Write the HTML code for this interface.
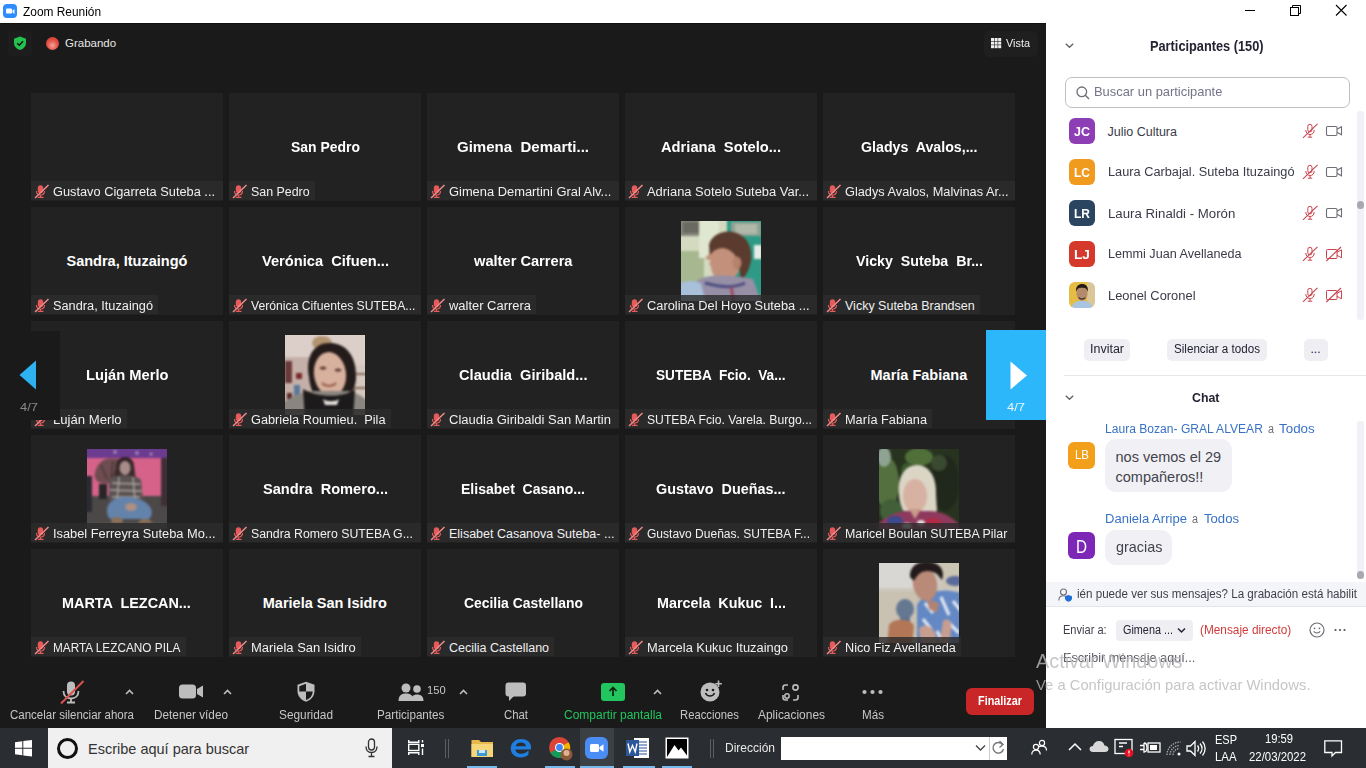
<!DOCTYPE html><html><head><meta charset="utf-8"><style>
*{margin:0;padding:0;box-sizing:border-box}
html,body{width:1366px;height:768px;overflow:hidden;background:#1a1a1a;font-family:"Liberation Sans",sans-serif}
.a{position:absolute}
.t{position:absolute;white-space:pre;line-height:1;transform-origin:0 0}
svg{position:absolute;overflow:visible}
</style></head><body>
<div class="a" style="left:0;top:0;width:1366px;height:23px;background:#fff"></div><div class="a" style="left:3px;top:4px;width:14px;height:14px;border-radius:4px;background:#2d8cff"></div><svg style="left:3px;top:4px" width="14" height="14"><rect x="3" y="4.5" width="6" height="5" rx="1" fill="#fff"/><path d="M9.5 6.5 L11.5 5 V10 L9.5 8.5Z" fill="#fff"/></svg><div class="t" style="left:23.00px;top:6.00px;font-size:12px;color:#000;transform:scaleX(0.9910);">Zoom Reunión</div><div class="a" style="left:1245px;top:10px;width:10px;height:1px;background:#000"></div><svg style="left:1288px;top:3px" width="16" height="16"><rect x="2.5" y="4.5" width="8" height="8" fill="none" stroke="#000" stroke-width="1"/><path d="M4.5 4.5 V2.5 H12.5 V10.5 H10.5" fill="none" stroke="#000" stroke-width="1"/></svg><svg style="left:1334px;top:3px" width="16" height="16"><path d="M2 2 L12.5 12.5 M12.5 2 L2 12.5" stroke="#000" stroke-width="1.1"/></svg><div class="a" style="left:0;top:23px;width:1046px;height:705px;background:#1a1a1a"></div><div class="a" style="left:0;top:23px;width:1046px;height:1px;background:#111"></div><div class="a" style="left:8px;top:31px;width:24px;height:25px;border-radius:4px;background:#1d1d1d"></div><svg style="left:13px;top:36px" width="15" height="15"><path d="M7 0.5 L13 2.8 V7 C13 10.5 10.5 12.8 7 14 C3.5 12.8 1 10.5 1 7 V2.8Z" fill="#23c24f"/><path d="M4.2 7.2 L6.3 9.2 L10 5.3" fill="none" stroke="#111" stroke-width="1.5"/></svg><div class="a" style="left:46px;top:37px;width:13px;height:13px;border-radius:50%;background:radial-gradient(circle at 50% 65%,#f6a39a 0,#e5574a 45%,#d94338 70%)"></div><div class="t" style="left:65.00px;top:38.00px;font-size:11.5px;color:#e6e6e6;">Grabando</div><div class="a" style="left:984px;top:31px;width:54px;height:26px;border-radius:5px;background:#1f1f1f"></div><svg style="left:991px;top:38px" width="11" height="11"><rect x="0.0" y="0.0" width="3" height="3" fill="#f0f0f0"/><rect x="0.0" y="3.6" width="3" height="3" fill="#f0f0f0"/><rect x="0.0" y="7.2" width="3" height="3" fill="#f0f0f0"/><rect x="3.6" y="0.0" width="3" height="3" fill="#f0f0f0"/><rect x="3.6" y="3.6" width="3" height="3" fill="#f0f0f0"/><rect x="3.6" y="7.2" width="3" height="3" fill="#f0f0f0"/><rect x="7.2" y="0.0" width="3" height="3" fill="#f0f0f0"/><rect x="7.2" y="3.6" width="3" height="3" fill="#f0f0f0"/><rect x="7.2" y="7.2" width="3" height="3" fill="#f0f0f0"/></svg><div class="t" style="left:1006.00px;top:38.00px;font-size:11.5px;color:#f0f0f0;transform:scaleX(0.9464);">Vista</div><div class="a" style="left:31px;top:93px;width:192px;height:108px;background:#222"></div><div class="a" style="left:31px;top:181px;width:192px;height:19px;background:rgba(44,44,44,0.82)"></div><svg style="left:33px;top:182px" width="16" height="16"><rect x="4.8" y="3.2" width="5.4" height="8" rx="2.7" fill="#e65a5a"/><path d="M3.5 9 C3.5 11.8 5.3 13 7.5 13 C9.7 13 11.5 11.8 11.5 9" fill="none" stroke="#e65a5a" stroke-width="1.2"/><path d="M7.5 13 V15 M4.8 15.3 H10.5" stroke="#e65a5a" stroke-width="1.3"/><path d="M2 16 L15.5 3" stroke="#f08a8a" stroke-width="1.5"/></svg><div class="t" style="left:53.00px;top:186.00px;font-size:12.5px;color:#f0f0f0;transform:scaleX(1.0226);">Gustavo Cigarreta Suteba ...</div><div class="a" style="left:229px;top:93px;width:192px;height:108px;background:#222"></div><div class="t" style="left:290.50px;top:140.00px;font-size:14.5px;color:#fff;font-weight:bold;transform:scaleX(0.9622);">San Pedro</div><div class="a" style="left:229px;top:181px;width:86px;height:19px;background:rgba(44,44,44,0.82)"></div><svg style="left:231px;top:182px" width="16" height="16"><rect x="4.8" y="3.2" width="5.4" height="8" rx="2.7" fill="#e65a5a"/><path d="M3.5 9 C3.5 11.8 5.3 13 7.5 13 C9.7 13 11.5 11.8 11.5 9" fill="none" stroke="#e65a5a" stroke-width="1.2"/><path d="M7.5 13 V15 M4.8 15.3 H10.5" stroke="#e65a5a" stroke-width="1.3"/><path d="M2 16 L15.5 3" stroke="#f08a8a" stroke-width="1.5"/></svg><div class="t" style="left:251.00px;top:186.00px;font-size:12.5px;color:#f0f0f0;transform:scaleX(0.9920);">San Pedro</div><div class="a" style="left:427px;top:93px;width:192px;height:108px;background:#222"></div><div class="t" style="left:457.00px;top:140.00px;font-size:14.5px;color:#fff;font-weight:bold;transform:scaleX(1.0367);">Gimena  Demarti...</div><div class="a" style="left:427px;top:181px;width:192px;height:19px;background:rgba(44,44,44,0.82)"></div><svg style="left:429px;top:182px" width="16" height="16"><rect x="4.8" y="3.2" width="5.4" height="8" rx="2.7" fill="#e65a5a"/><path d="M3.5 9 C3.5 11.8 5.3 13 7.5 13 C9.7 13 11.5 11.8 11.5 9" fill="none" stroke="#e65a5a" stroke-width="1.2"/><path d="M7.5 13 V15 M4.8 15.3 H10.5" stroke="#e65a5a" stroke-width="1.3"/><path d="M2 16 L15.5 3" stroke="#f08a8a" stroke-width="1.5"/></svg><div class="t" style="left:449.00px;top:186.00px;font-size:12.5px;color:#f0f0f0;transform:scaleX(1.0307);">Gimena Demartini Gral Alv...</div><div class="a" style="left:625px;top:93px;width:192px;height:108px;background:#222"></div><div class="t" style="left:661.00px;top:140.00px;font-size:14.5px;color:#fff;font-weight:bold;transform:scaleX(1.0132);">Adriana  Sotelo...</div><div class="a" style="left:625px;top:181px;width:192px;height:19px;background:rgba(44,44,44,0.82)"></div><svg style="left:627px;top:182px" width="16" height="16"><rect x="4.8" y="3.2" width="5.4" height="8" rx="2.7" fill="#e65a5a"/><path d="M3.5 9 C3.5 11.8 5.3 13 7.5 13 C9.7 13 11.5 11.8 11.5 9" fill="none" stroke="#e65a5a" stroke-width="1.2"/><path d="M7.5 13 V15 M4.8 15.3 H10.5" stroke="#e65a5a" stroke-width="1.3"/><path d="M2 16 L15.5 3" stroke="#f08a8a" stroke-width="1.5"/></svg><div class="t" style="left:647.00px;top:186.00px;font-size:12.5px;color:#f0f0f0;transform:scaleX(1.0330);">Adriana Sotelo Suteba Var...</div><div class="a" style="left:823px;top:93px;width:192px;height:108px;background:#222"></div><div class="t" style="left:860.50px;top:140.00px;font-size:14.5px;color:#fff;font-weight:bold;transform:scaleX(0.9788);">Gladys  Avalos,...</div><div class="a" style="left:823px;top:181px;width:192px;height:19px;background:rgba(44,44,44,0.82)"></div><svg style="left:825px;top:182px" width="16" height="16"><rect x="4.8" y="3.2" width="5.4" height="8" rx="2.7" fill="#e65a5a"/><path d="M3.5 9 C3.5 11.8 5.3 13 7.5 13 C9.7 13 11.5 11.8 11.5 9" fill="none" stroke="#e65a5a" stroke-width="1.2"/><path d="M7.5 13 V15 M4.8 15.3 H10.5" stroke="#e65a5a" stroke-width="1.3"/><path d="M2 16 L15.5 3" stroke="#f08a8a" stroke-width="1.5"/></svg><div class="t" style="left:845.00px;top:186.00px;font-size:12.5px;color:#f0f0f0;transform:scaleX(1.0208);">Gladys Avalos, Malvinas Ar...</div><div class="a" style="left:31px;top:207px;width:192px;height:108px;background:#222"></div><div class="t" style="left:66.50px;top:254.00px;font-size:14.5px;color:#fff;font-weight:bold;">Sandra, Ituzaingó</div><div class="a" style="left:31px;top:295px;width:127px;height:19px;background:rgba(44,44,44,0.82)"></div><svg style="left:33px;top:296px" width="16" height="16"><rect x="4.8" y="3.2" width="5.4" height="8" rx="2.7" fill="#e65a5a"/><path d="M3.5 9 C3.5 11.8 5.3 13 7.5 13 C9.7 13 11.5 11.8 11.5 9" fill="none" stroke="#e65a5a" stroke-width="1.2"/><path d="M7.5 13 V15 M4.8 15.3 H10.5" stroke="#e65a5a" stroke-width="1.3"/><path d="M2 16 L15.5 3" stroke="#f08a8a" stroke-width="1.5"/></svg><div class="t" style="left:53.00px;top:300.00px;font-size:12.5px;color:#f0f0f0;transform:scaleX(1.0206);">Sandra, Ituzaingó</div><div class="a" style="left:229px;top:207px;width:192px;height:108px;background:#222"></div><div class="t" style="left:261.50px;top:254.00px;font-size:14.5px;color:#fff;font-weight:bold;transform:scaleX(1.0103);">Verónica  Cifuen...</div><div class="a" style="left:229px;top:295px;width:192px;height:19px;background:rgba(44,44,44,0.82)"></div><svg style="left:231px;top:296px" width="16" height="16"><rect x="4.8" y="3.2" width="5.4" height="8" rx="2.7" fill="#e65a5a"/><path d="M3.5 9 C3.5 11.8 5.3 13 7.5 13 C9.7 13 11.5 11.8 11.5 9" fill="none" stroke="#e65a5a" stroke-width="1.2"/><path d="M7.5 13 V15 M4.8 15.3 H10.5" stroke="#e65a5a" stroke-width="1.3"/><path d="M2 16 L15.5 3" stroke="#f08a8a" stroke-width="1.5"/></svg><div class="t" style="left:251.00px;top:300.00px;font-size:12.5px;color:#f0f0f0;transform:scaleX(0.9744);">Verónica Cifuentes SUTEBA...</div><div class="a" style="left:427px;top:207px;width:192px;height:108px;background:#222"></div><div class="t" style="left:473.75px;top:254.00px;font-size:14.5px;color:#fff;font-weight:bold;transform:scaleX(1.0100);">walter Carrera</div><div class="a" style="left:427px;top:295px;width:109px;height:19px;background:rgba(44,44,44,0.82)"></div><svg style="left:429px;top:296px" width="16" height="16"><rect x="4.8" y="3.2" width="5.4" height="8" rx="2.7" fill="#e65a5a"/><path d="M3.5 9 C3.5 11.8 5.3 13 7.5 13 C9.7 13 11.5 11.8 11.5 9" fill="none" stroke="#e65a5a" stroke-width="1.2"/><path d="M7.5 13 V15 M4.8 15.3 H10.5" stroke="#e65a5a" stroke-width="1.3"/><path d="M2 16 L15.5 3" stroke="#f08a8a" stroke-width="1.5"/></svg><div class="t" style="left:449.00px;top:300.00px;font-size:12.5px;color:#f0f0f0;transform:scaleX(1.0355);">walter Carrera</div><div class="a" style="left:625px;top:207px;width:192px;height:108px;background:#222"></div><div class="a" style="left:681px;top:221px;width:80px;height:80px;overflow:hidden;border-radius:0px"><svg style="left:0;top:0;filter:blur(1.0px)" width="80" height="80" viewBox="0 0 80 80">
<rect x="-5" y="-5" width="90" height="90" fill="#d3dac0"/>
<rect x="-5" y="-5" width="28" height="20" fill="#85857c"/>
<rect x="2" y="1" width="17" height="11" fill="#6a6a62"/>
<rect x="-5" y="30" width="28" height="55" fill="#a7b78f"/>
<rect x="18" y="-5" width="20" height="42" fill="#e0e7d0"/>
<rect x="46" y="-5" width="40" height="90" fill="#2e9a86"/>
<rect x="50" y="1" width="30" height="14" fill="#8fa292"/>
<rect x="54" y="3" width="22" height="10" fill="#b2b8aa"/>
<rect x="73" y="24" width="8" height="14" fill="#e8ece6"/>
<path d="M30 20 C36 16 50 18 56 26 L58 50 C54 58 46 60 36 58 C32 54 30 50 30 46 L28 42 L30 40 L24 37 L28 33 C28 28 28 24 30 20Z" fill="#c3917b"/>
<path d="M28 24 C30 14 42 9 52 11 C64 13 72 24 70 40 C68 50 64 56 60 60 L58 44 C56 34 50 28 42 27 C36 27 32 30 29 34Z" fill="#5a3b2d"/>
<ellipse cx="56" cy="42" rx="4.5" ry="6.5" fill="#b5826c"/>
<path d="M16 60 C26 52 50 54 72 58 L82 86 H8 Z" fill="#968fa6"/>
<path d="M24 62 C38 66 52 68 64 62" stroke="#4e4e82" stroke-width="3" fill="none"/>
<path d="M50 66 L54 86" stroke="#a04a60" stroke-width="3"/>
<path d="M-5 64 C6 58 14 60 20 62 L26 86 H-5 Z" fill="#a8c0da"/>
</svg></div><div class="a" style="left:625px;top:295px;width:192px;height:19px;background:rgba(44,44,44,0.82)"></div><svg style="left:627px;top:296px" width="16" height="16"><rect x="4.8" y="3.2" width="5.4" height="8" rx="2.7" fill="#e65a5a"/><path d="M3.5 9 C3.5 11.8 5.3 13 7.5 13 C9.7 13 11.5 11.8 11.5 9" fill="none" stroke="#e65a5a" stroke-width="1.2"/><path d="M7.5 13 V15 M4.8 15.3 H10.5" stroke="#e65a5a" stroke-width="1.3"/><path d="M2 16 L15.5 3" stroke="#f08a8a" stroke-width="1.5"/></svg><div class="t" style="left:647.00px;top:300.00px;font-size:12.5px;color:#f0f0f0;transform:scaleX(1.0258);">Carolina Del Hoyo Suteba ...</div><div class="a" style="left:823px;top:207px;width:192px;height:108px;background:#222"></div><div class="t" style="left:855.50px;top:254.00px;font-size:14.5px;color:#fff;font-weight:bold;transform:scaleX(0.9808);">Vicky  Suteba  Br...</div><div class="a" style="left:823px;top:295px;width:157px;height:19px;background:rgba(44,44,44,0.82)"></div><svg style="left:825px;top:296px" width="16" height="16"><rect x="4.8" y="3.2" width="5.4" height="8" rx="2.7" fill="#e65a5a"/><path d="M3.5 9 C3.5 11.8 5.3 13 7.5 13 C9.7 13 11.5 11.8 11.5 9" fill="none" stroke="#e65a5a" stroke-width="1.2"/><path d="M7.5 13 V15 M4.8 15.3 H10.5" stroke="#e65a5a" stroke-width="1.3"/><path d="M2 16 L15.5 3" stroke="#f08a8a" stroke-width="1.5"/></svg><div class="t" style="left:845.00px;top:300.00px;font-size:12.5px;color:#f0f0f0;">Vicky Suteba Brandsen</div><div class="a" style="left:31px;top:321px;width:192px;height:108px;background:#222"></div><div class="t" style="left:85.75px;top:368.00px;font-size:14.5px;color:#fff;font-weight:bold;transform:scaleX(1.0140);">Luján Merlo</div><div class="a" style="left:31px;top:409px;width:96px;height:19px;background:rgba(44,44,44,0.82)"></div><svg style="left:33px;top:410px" width="16" height="16"><rect x="4.8" y="3.2" width="5.4" height="8" rx="2.7" fill="#e65a5a"/><path d="M3.5 9 C3.5 11.8 5.3 13 7.5 13 C9.7 13 11.5 11.8 11.5 9" fill="none" stroke="#e65a5a" stroke-width="1.2"/><path d="M7.5 13 V15 M4.8 15.3 H10.5" stroke="#e65a5a" stroke-width="1.3"/><path d="M2 16 L15.5 3" stroke="#f08a8a" stroke-width="1.5"/></svg><div class="t" style="left:53.00px;top:414.00px;font-size:12.5px;color:#f0f0f0;transform:scaleX(1.0503);">Luján Merlo</div><div class="a" style="left:229px;top:321px;width:192px;height:108px;background:#222"></div><div class="a" style="left:285px;top:335px;width:80px;height:80px;overflow:hidden;border-radius:0px"><svg style="left:0;top:0;filter:blur(1.0px)" width="80" height="80" viewBox="0 0 80 80">
<rect x="-5" y="-5" width="90" height="90" fill="#dccfca"/>
<ellipse cx="37" cy="8" rx="10" ry="7" fill="#b39470"/>
<rect x="-5" y="22" width="30" height="45" fill="#c4b0a8"/>
<rect x="0" y="26" width="7" height="22" fill="#6a3a3a"/>
<rect x="9" y="50" width="6" height="12" fill="#5a7a9a"/>
<rect x="11" y="38" width="6" height="6" fill="#7a2a2a"/>
<rect x="2" y="58" width="5" height="6" fill="#5a2a2a"/>
<rect x="62" y="30" width="23" height="34" fill="#d4c8bf"/>
<rect x="62" y="38" width="23" height="2" fill="#8a6a5a"/>
<rect x="62" y="52" width="23" height="2" fill="#8a6a5a"/>
<path d="M24 42 C20 20 30 7 46 8 C62 9 72 22 71 44 C70 56 64 62 56 64 L34 64 C27 60 25 52 24 42Z" fill="#241c1a"/>
<ellipse cx="45" cy="39" rx="16" ry="22" fill="#d8b09e" transform="rotate(-8 45 39)"/>
<path d="M28 22 C34 12 52 12 60 20 C56 16 44 15 34 20Z" fill="#241c1a"/>
<path d="M37 48 C41 52 47 52 51 48" stroke="#9a6050" stroke-width="2.2" fill="none"/>
<ellipse cx="38" cy="33" rx="3.2" ry="1.6" fill="#5a3a30"/>
<ellipse cx="53" cy="35" rx="3.2" ry="1.6" fill="#5a3a30"/>
<path d="M-5 70 C4 62 16 58 24 56 L64 56 C72 58 80 62 85 70 V85 H-5Z" fill="#8b8580"/>
<path d="M18 54 C30 62 58 64 70 54 L68 85 H20Z" fill="#1c1a1a"/>
<path d="M38 64 C42 67 50 67 54 64 L52 70 H40Z" fill="#e6e0dc"/>
</svg></div><div class="a" style="left:229px;top:409px;width:162px;height:19px;background:rgba(44,44,44,0.82)"></div><svg style="left:231px;top:410px" width="16" height="16"><rect x="4.8" y="3.2" width="5.4" height="8" rx="2.7" fill="#e65a5a"/><path d="M3.5 9 C3.5 11.8 5.3 13 7.5 13 C9.7 13 11.5 11.8 11.5 9" fill="none" stroke="#e65a5a" stroke-width="1.2"/><path d="M7.5 13 V15 M4.8 15.3 H10.5" stroke="#e65a5a" stroke-width="1.3"/><path d="M2 16 L15.5 3" stroke="#f08a8a" stroke-width="1.5"/></svg><div class="t" style="left:251.00px;top:414.00px;font-size:12.5px;color:#f0f0f0;transform:scaleX(1.0189);">Gabriela Roumieu.  Pila</div><div class="a" style="left:427px;top:321px;width:192px;height:108px;background:#222"></div><div class="t" style="left:458.75px;top:368.00px;font-size:14.5px;color:#fff;font-weight:bold;transform:scaleX(1.0094);">Claudia  Giribald...</div><div class="a" style="left:427px;top:409px;width:192px;height:19px;background:rgba(44,44,44,0.82)"></div><svg style="left:429px;top:410px" width="16" height="16"><rect x="4.8" y="3.2" width="5.4" height="8" rx="2.7" fill="#e65a5a"/><path d="M3.5 9 C3.5 11.8 5.3 13 7.5 13 C9.7 13 11.5 11.8 11.5 9" fill="none" stroke="#e65a5a" stroke-width="1.2"/><path d="M7.5 13 V15 M4.8 15.3 H10.5" stroke="#e65a5a" stroke-width="1.3"/><path d="M2 16 L15.5 3" stroke="#f08a8a" stroke-width="1.5"/></svg><div class="t" style="left:449.00px;top:414.00px;font-size:12.5px;color:#f0f0f0;transform:scaleX(1.0409);">Claudia Giribaldi San Martin</div><div class="a" style="left:625px;top:321px;width:192px;height:108px;background:#222"></div><div class="t" style="left:656.00px;top:368.00px;font-size:14.5px;color:#fff;font-weight:bold;transform:scaleX(0.9380);">SUTEBA  Fcio.  Va...</div><div class="a" style="left:625px;top:409px;width:192px;height:19px;background:rgba(44,44,44,0.82)"></div><svg style="left:627px;top:410px" width="16" height="16"><rect x="4.8" y="3.2" width="5.4" height="8" rx="2.7" fill="#e65a5a"/><path d="M3.5 9 C3.5 11.8 5.3 13 7.5 13 C9.7 13 11.5 11.8 11.5 9" fill="none" stroke="#e65a5a" stroke-width="1.2"/><path d="M7.5 13 V15 M4.8 15.3 H10.5" stroke="#e65a5a" stroke-width="1.3"/><path d="M2 16 L15.5 3" stroke="#f08a8a" stroke-width="1.5"/></svg><div class="t" style="left:647.00px;top:414.00px;font-size:12.5px;color:#f0f0f0;transform:scaleX(0.9743);">SUTEBA Fcio. Varela. Burgo...</div><div class="a" style="left:823px;top:321px;width:192px;height:108px;background:#222"></div><div class="t" style="left:870.50px;top:368.00px;font-size:14.5px;color:#fff;font-weight:bold;">María Fabiana</div><div class="a" style="left:823px;top:409px;width:109px;height:19px;background:rgba(44,44,44,0.82)"></div><svg style="left:825px;top:410px" width="16" height="16"><rect x="4.8" y="3.2" width="5.4" height="8" rx="2.7" fill="#e65a5a"/><path d="M3.5 9 C3.5 11.8 5.3 13 7.5 13 C9.7 13 11.5 11.8 11.5 9" fill="none" stroke="#e65a5a" stroke-width="1.2"/><path d="M7.5 13 V15 M4.8 15.3 H10.5" stroke="#e65a5a" stroke-width="1.3"/><path d="M2 16 L15.5 3" stroke="#f08a8a" stroke-width="1.5"/></svg><div class="t" style="left:845.00px;top:414.00px;font-size:12.5px;color:#f0f0f0;transform:scaleX(1.0174);">María Fabiana</div><div class="a" style="left:31px;top:435px;width:192px;height:108px;background:#222"></div><div class="a" style="left:87px;top:449px;width:80px;height:80px;overflow:hidden;border-radius:0px"><svg style="left:0;top:0;filter:blur(1.0px)" width="80" height="80" viewBox="0 0 80 80">
<rect x="-5" y="-5" width="90" height="90" fill="#4c4848"/>
<rect x="-5" y="-5" width="90" height="14" fill="#6b3b8f"/>
<circle cx="28" cy="3" r="2" fill="#9a80b0"/><circle cx="50" cy="4" r="2" fill="#9a80b0"/><circle cx="64" cy="5" r="1.5" fill="#b090c0"/>
<rect x="-5" y="9" width="82" height="38" fill="#d6628a"/>
<rect x="74" y="9" width="11" height="48" fill="#3e2e36"/>
<path d="M8 24 C10 14 18 8 26 10 C32 8 38 14 36 22 C38 30 30 36 22 34 C14 36 6 32 8 24Z" fill="#6e4c50"/>
<path d="M14 16 L20 30 M26 12 L24 30 M32 18 L22 32" stroke="#4a3a34" stroke-width="1.5"/>
<rect x="12" y="35" width="8" height="15" fill="#262626"/>
<rect x="-5" y="27" width="10" height="36" fill="#2a2a32"/>
<path d="M29 16 C29 6 47 6 47 16 L49 32 H27Z" fill="#3a2a2a"/>
<ellipse cx="38" cy="19" rx="5.5" ry="7" fill="#a88c8c"/>
<path d="M31 14 C33 9 43 9 45 14 L45 12 C43 7 33 7 31 12Z" fill="#2a1e1e"/>
<path d="M22 30 C28 25 48 25 54 31 L56 52 H22Z" fill="#5a5252"/>
<path d="M25 34 L53 35 M23 41 L55 42 M25 48 L53 48 M32 28 L30 52 M46 28 L48 52" stroke="#aaa6a2" stroke-width="1.4"/>
<path d="M20 60 C22 48 40 44 56 52 C64 56 68 64 62 70 L24 70 C20 68 20 64 20 60Z" fill="#6383ab"/>
<ellipse cx="44" cy="58" rx="6" ry="4" fill="#b09080"/>
<ellipse cx="30" cy="72" rx="6" ry="4" fill="#8a7058"/>
<ellipse cx="58" cy="74" rx="7" ry="4" fill="#8a7058"/>
<rect x="-5" y="74" width="90" height="11" fill="#555050"/>
</svg></div><div class="a" style="left:31px;top:523px;width:192px;height:19px;background:rgba(44,44,44,0.82)"></div><svg style="left:33px;top:524px" width="16" height="16"><rect x="4.8" y="3.2" width="5.4" height="8" rx="2.7" fill="#e65a5a"/><path d="M3.5 9 C3.5 11.8 5.3 13 7.5 13 C9.7 13 11.5 11.8 11.5 9" fill="none" stroke="#e65a5a" stroke-width="1.2"/><path d="M7.5 13 V15 M4.8 15.3 H10.5" stroke="#e65a5a" stroke-width="1.3"/><path d="M2 16 L15.5 3" stroke="#f08a8a" stroke-width="1.5"/></svg><div class="t" style="left:53.00px;top:528.00px;font-size:12.5px;color:#f0f0f0;transform:scaleX(1.0259);">Isabel Ferreyra Suteba Mo...</div><div class="a" style="left:229px;top:435px;width:192px;height:108px;background:#222"></div><div class="t" style="left:262.50px;top:482.00px;font-size:14.5px;color:#fff;font-weight:bold;transform:scaleX(1.0074);">Sandra  Romero...</div><div class="a" style="left:229px;top:523px;width:192px;height:19px;background:rgba(44,44,44,0.82)"></div><svg style="left:231px;top:524px" width="16" height="16"><rect x="4.8" y="3.2" width="5.4" height="8" rx="2.7" fill="#e65a5a"/><path d="M3.5 9 C3.5 11.8 5.3 13 7.5 13 C9.7 13 11.5 11.8 11.5 9" fill="none" stroke="#e65a5a" stroke-width="1.2"/><path d="M7.5 13 V15 M4.8 15.3 H10.5" stroke="#e65a5a" stroke-width="1.3"/><path d="M2 16 L15.5 3" stroke="#f08a8a" stroke-width="1.5"/></svg><div class="t" style="left:251.00px;top:528.00px;font-size:12.5px;color:#f0f0f0;transform:scaleX(0.9834);">Sandra Romero SUTEBA G...</div><div class="a" style="left:427px;top:435px;width:192px;height:108px;background:#222"></div><div class="t" style="left:461.00px;top:482.00px;font-size:14.5px;color:#fff;font-weight:bold;transform:scaleX(0.9678);">Elisabet  Casano...</div><div class="a" style="left:427px;top:523px;width:192px;height:19px;background:rgba(44,44,44,0.82)"></div><svg style="left:429px;top:524px" width="16" height="16"><rect x="4.8" y="3.2" width="5.4" height="8" rx="2.7" fill="#e65a5a"/><path d="M3.5 9 C3.5 11.8 5.3 13 7.5 13 C9.7 13 11.5 11.8 11.5 9" fill="none" stroke="#e65a5a" stroke-width="1.2"/><path d="M7.5 13 V15 M4.8 15.3 H10.5" stroke="#e65a5a" stroke-width="1.3"/><path d="M2 16 L15.5 3" stroke="#f08a8a" stroke-width="1.5"/></svg><div class="t" style="left:449.00px;top:528.00px;font-size:12.5px;color:#f0f0f0;">Elisabet Casanova Suteba- ...</div><div class="a" style="left:625px;top:435px;width:192px;height:108px;background:#222"></div><div class="t" style="left:656.30px;top:482.00px;font-size:14.5px;color:#fff;font-weight:bold;transform:scaleX(0.9913);">Gustavo  Dueñas...</div><div class="a" style="left:625px;top:523px;width:192px;height:19px;background:rgba(44,44,44,0.82)"></div><svg style="left:627px;top:524px" width="16" height="16"><rect x="4.8" y="3.2" width="5.4" height="8" rx="2.7" fill="#e65a5a"/><path d="M3.5 9 C3.5 11.8 5.3 13 7.5 13 C9.7 13 11.5 11.8 11.5 9" fill="none" stroke="#e65a5a" stroke-width="1.2"/><path d="M7.5 13 V15 M4.8 15.3 H10.5" stroke="#e65a5a" stroke-width="1.3"/><path d="M2 16 L15.5 3" stroke="#f08a8a" stroke-width="1.5"/></svg><div class="t" style="left:647.00px;top:528.00px;font-size:12.5px;color:#f0f0f0;transform:scaleX(0.9618);">Gustavo Dueñas. SUTEBA F...</div><div class="a" style="left:823px;top:435px;width:192px;height:108px;background:#222"></div><div class="a" style="left:879px;top:449px;width:80px;height:80px;overflow:hidden;border-radius:0px"><svg style="left:0;top:0;filter:blur(1.0px)" width="80" height="80" viewBox="0 0 80 80">
<rect x="-5" y="-5" width="90" height="90" fill="#27331f"/>
<ellipse cx="8" cy="34" rx="12" ry="26" fill="#55703f"/>
<ellipse cx="5" cy="8" rx="7" ry="10" fill="#8ea392"/>
<ellipse cx="40" cy="8" rx="14" ry="9" fill="#50703a"/>
<ellipse cx="28" cy="22" rx="6" ry="8" fill="#3c5a2c"/>
<ellipse cx="66" cy="34" rx="14" ry="28" fill="#1f281b"/>
<ellipse cx="60" cy="14" rx="8" ry="8" fill="#3a4a30"/>
<ellipse cx="12" cy="62" rx="11" ry="12" fill="#41603a"/>
<path d="M20 46 C18 28 26 16 38 16 C50 16 58 28 57 46 L58 62 C54 64 50 64 48 62 L24 62 C22 56 20 52 20 46Z" fill="#dbd5c6"/>
<ellipse cx="36" cy="47" rx="12" ry="17" fill="#d7b1a1"/>
<path d="M25 32 C30 22 46 22 52 32 C48 26 40 24 34 26Z" fill="#dbd5c6"/>
<path d="M-5 80 C5 66 20 62 30 62 L50 62 C62 62 72 66 85 80 V85 H-5Z" fill="#8e3a5e"/>
<ellipse cx="16" cy="72" rx="8" ry="5" fill="#3a4a8c"/>
<ellipse cx="54" cy="74" rx="9" ry="5" fill="#b22a46"/>
<ellipse cx="28" cy="77" rx="5" ry="3" fill="#dedede"/>
<ellipse cx="42" cy="74" rx="4" ry="3" fill="#e6e0e0"/>
<path d="M30 60 L36 70 L42 60Z" fill="#c89a8a"/>
</svg></div><div class="a" style="left:823px;top:523px;width:192px;height:19px;background:rgba(44,44,44,0.82)"></div><svg style="left:825px;top:524px" width="16" height="16"><rect x="4.8" y="3.2" width="5.4" height="8" rx="2.7" fill="#e65a5a"/><path d="M3.5 9 C3.5 11.8 5.3 13 7.5 13 C9.7 13 11.5 11.8 11.5 9" fill="none" stroke="#e65a5a" stroke-width="1.2"/><path d="M7.5 13 V15 M4.8 15.3 H10.5" stroke="#e65a5a" stroke-width="1.3"/><path d="M2 16 L15.5 3" stroke="#f08a8a" stroke-width="1.5"/></svg><div class="t" style="left:845.00px;top:528.00px;font-size:12.5px;color:#f0f0f0;transform:scaleX(0.9900);">Maricel Boulan SUTEBA Pilar</div><div class="a" style="left:31px;top:549px;width:192px;height:108px;background:#222"></div><div class="t" style="left:62.30px;top:596.00px;font-size:14.5px;color:#fff;font-weight:bold;transform:scaleX(0.9937);">MARTA  LEZCAN...</div><div class="a" style="left:31px;top:637px;width:155px;height:19px;background:rgba(44,44,44,0.82)"></div><svg style="left:33px;top:638px" width="16" height="16"><rect x="4.8" y="3.2" width="5.4" height="8" rx="2.7" fill="#e65a5a"/><path d="M3.5 9 C3.5 11.8 5.3 13 7.5 13 C9.7 13 11.5 11.8 11.5 9" fill="none" stroke="#e65a5a" stroke-width="1.2"/><path d="M7.5 13 V15 M4.8 15.3 H10.5" stroke="#e65a5a" stroke-width="1.3"/><path d="M2 16 L15.5 3" stroke="#f08a8a" stroke-width="1.5"/></svg><div class="t" style="left:53.00px;top:642.00px;font-size:12.5px;color:#f0f0f0;transform:scaleX(0.9434);">MARTA LEZCANO PILA</div><div class="a" style="left:229px;top:549px;width:192px;height:108px;background:#222"></div><div class="t" style="left:262.75px;top:596.00px;font-size:14.5px;color:#fff;font-weight:bold;">Mariela San Isidro</div><div class="a" style="left:229px;top:637px;width:132px;height:19px;background:rgba(44,44,44,0.82)"></div><svg style="left:231px;top:638px" width="16" height="16"><rect x="4.8" y="3.2" width="5.4" height="8" rx="2.7" fill="#e65a5a"/><path d="M3.5 9 C3.5 11.8 5.3 13 7.5 13 C9.7 13 11.5 11.8 11.5 9" fill="none" stroke="#e65a5a" stroke-width="1.2"/><path d="M7.5 13 V15 M4.8 15.3 H10.5" stroke="#e65a5a" stroke-width="1.3"/><path d="M2 16 L15.5 3" stroke="#f08a8a" stroke-width="1.5"/></svg><div class="t" style="left:251.00px;top:642.00px;font-size:12.5px;color:#f0f0f0;transform:scaleX(1.0383);">Mariela San Isidro</div><div class="a" style="left:427px;top:549px;width:192px;height:108px;background:#222"></div><div class="t" style="left:463.50px;top:596.00px;font-size:14.5px;color:#fff;font-weight:bold;transform:scaleX(0.9589);">Cecilia Castellano</div><div class="a" style="left:427px;top:637px;width:127px;height:19px;background:rgba(44,44,44,0.82)"></div><svg style="left:429px;top:638px" width="16" height="16"><rect x="4.8" y="3.2" width="5.4" height="8" rx="2.7" fill="#e65a5a"/><path d="M3.5 9 C3.5 11.8 5.3 13 7.5 13 C9.7 13 11.5 11.8 11.5 9" fill="none" stroke="#e65a5a" stroke-width="1.2"/><path d="M7.5 13 V15 M4.8 15.3 H10.5" stroke="#e65a5a" stroke-width="1.3"/><path d="M2 16 L15.5 3" stroke="#f08a8a" stroke-width="1.5"/></svg><div class="t" style="left:449.00px;top:642.00px;font-size:12.5px;color:#f0f0f0;">Cecilia Castellano</div><div class="a" style="left:625px;top:549px;width:192px;height:108px;background:#222"></div><div class="t" style="left:656.50px;top:596.00px;font-size:14.5px;color:#fff;font-weight:bold;transform:scaleX(0.9881);">Marcela  Kukuc  I...</div><div class="a" style="left:625px;top:637px;width:168px;height:19px;background:rgba(44,44,44,0.82)"></div><svg style="left:627px;top:638px" width="16" height="16"><rect x="4.8" y="3.2" width="5.4" height="8" rx="2.7" fill="#e65a5a"/><path d="M3.5 9 C3.5 11.8 5.3 13 7.5 13 C9.7 13 11.5 11.8 11.5 9" fill="none" stroke="#e65a5a" stroke-width="1.2"/><path d="M7.5 13 V15 M4.8 15.3 H10.5" stroke="#e65a5a" stroke-width="1.3"/><path d="M2 16 L15.5 3" stroke="#f08a8a" stroke-width="1.5"/></svg><div class="t" style="left:647.00px;top:642.00px;font-size:12.5px;color:#f0f0f0;transform:scaleX(1.0301);">Marcela Kukuc Ituzaingo</div><div class="a" style="left:823px;top:549px;width:192px;height:108px;background:#222"></div><div class="a" style="left:879px;top:563px;width:80px;height:80px;overflow:hidden;border-radius:0px"><svg style="left:0;top:0;filter:blur(1.0px)" width="80" height="80" viewBox="0 0 80 80">
<rect x="-5" y="-5" width="90" height="90" fill="#cdc8bf"/>
<rect x="-5" y="-5" width="42" height="30" fill="#d9d7d3"/>
<rect x="-5" y="28" width="50" height="57" fill="#c9c1b2"/>
<rect x="62" y="-5" width="25" height="30" fill="#cbc5b4"/>
<ellipse cx="76" cy="18" rx="9" ry="5" fill="#5a6a9a"/>
<path d="M38 42 C44 30 60 26 72 28 L85 30 V85 H38Z" fill="#6488c4"/>
<path d="M46 40 L54 50 M62 34 L70 52 M44 56 L52 66 M68 58 L80 70 M58 68 L64 80 M74 38 L82 48 M52 46 L58 40" stroke="#dfe6f2" stroke-width="3.2"/>
<path d="M48 36 L60 40 L58 50 L50 46Z" fill="#b08272"/>
<ellipse cx="46" cy="21" rx="12" ry="17" fill="#b98a78" transform="rotate(-10 46 21)"/>
<path d="M31 14 C30 2 42 -3 52 -1 C62 1 66 8 63 17 L58 11 C50 6 40 7 35 18Z" fill="#231b1b"/>
<ellipse cx="26" cy="46" rx="9" ry="10" fill="#647892"/>
<rect x="21" y="54" width="10" height="7" fill="#5f7390"/>
<path d="M10 62 C14 55 32 55 35 63 L33 85 H8Z" fill="#b37656"/>
<path d="M40 66 C44 60 52 62 56 70 L60 85 H42Z" fill="#c79e90"/>
<path d="M64 58 C68 54 74 58 72 66 L70 85 H60Z" fill="#c79e90"/>
</svg></div><div class="a" style="left:823px;top:637px;width:138px;height:19px;background:rgba(44,44,44,0.82)"></div><svg style="left:825px;top:638px" width="16" height="16"><rect x="4.8" y="3.2" width="5.4" height="8" rx="2.7" fill="#e65a5a"/><path d="M3.5 9 C3.5 11.8 5.3 13 7.5 13 C9.7 13 11.5 11.8 11.5 9" fill="none" stroke="#e65a5a" stroke-width="1.2"/><path d="M7.5 13 V15 M4.8 15.3 H10.5" stroke="#e65a5a" stroke-width="1.3"/><path d="M2 16 L15.5 3" stroke="#f08a8a" stroke-width="1.5"/></svg><div class="t" style="left:845.00px;top:642.00px;font-size:12.5px;color:#f0f0f0;transform:scaleX(1.0114);">Nico Fiz Avellaneda</div><div class="a" style="left:0;top:331px;width:60px;height:89px;background:#1a1a1a"></div><svg style="left:19px;top:360px" width="18" height="30"><path d="M17 0.5 V29.5 L0.5 15Z" fill="#2eb2f2"/></svg><div class="t" style="left:20.00px;top:402.00px;font-size:11px;color:#8a8a8a;transform:scaleX(1.1771);">4/7</div><div class="a" style="left:986px;top:330px;width:60px;height:90px;background:#2db7fb"></div><svg style="left:1010px;top:361px" width="18" height="30"><path d="M0.5 0.5 V28.5 L17 14.5Z" fill="#fff"/></svg><div class="t" style="left:1007.00px;top:402.00px;font-size:11px;color:#eaf6fe;transform:scaleX(1.1771);">4/7</div><div class="t" style="left:10.00px;top:709.00px;font-size:12.5px;color:#c6c6c6;transform:scaleX(0.9199);">Cancelar silenciar ahora</div><div class="t" style="left:154.00px;top:709.00px;font-size:12.5px;color:#c6c6c6;transform:scaleX(0.9424);">Detener vídeo</div><div class="t" style="left:279.00px;top:709.00px;font-size:12.5px;color:#c6c6c6;transform:scaleX(0.9476);">Seguridad</div><div class="t" style="left:377.40px;top:709.00px;font-size:12.5px;color:#c6c6c6;transform:scaleX(0.9327);">Participantes</div><div class="t" style="left:503.70px;top:709.00px;font-size:12.5px;color:#c6c6c6;transform:scaleX(0.9090);">Chat</div><div class="t" style="left:563.80px;top:709.00px;font-size:12.5px;color:#22c55e;transform:scaleX(0.9596);">Compartir pantalla</div><div class="t" style="left:680.00px;top:709.00px;font-size:12.5px;color:#c6c6c6;transform:scaleX(0.9003);">Reacciones</div><div class="t" style="left:758.00px;top:709.00px;font-size:12.5px;color:#c6c6c6;transform:scaleX(0.9547);">Aplicaciones</div><div class="t" style="left:862.00px;top:709.00px;font-size:12.5px;color:#c6c6c6;transform:scaleX(0.9316);">Más</div><svg style="left:58px;top:680px" width="28" height="26"><rect x="9" y="1.5" width="8" height="14" rx="4" fill="#bdbdbd"/><path d="M5.5 11 C5.5 16 9 18.5 13 18.5 C17 18.5 20.5 16 20.5 11" fill="none" stroke="#bdbdbd" stroke-width="1.8"/><path d="M13 18.5 V22 M9 22.5 H17" stroke="#bdbdbd" stroke-width="1.8"/><path d="M3 23.5 L25.5 1" stroke="#d9534f" stroke-width="2"/></svg><svg style="left:125px;top:689px" width="10" height="6"><path d="M1 5 L4.5 1.5 L8 5" fill="none" stroke="#bdbdbd" stroke-width="1.6"/></svg><svg style="left:223px;top:689px" width="10" height="6"><path d="M1 5 L4.5 1.5 L8 5" fill="none" stroke="#bdbdbd" stroke-width="1.6"/></svg><svg style="left:459px;top:689px" width="10" height="6"><path d="M1 5 L4.5 1.5 L8 5" fill="none" stroke="#bdbdbd" stroke-width="1.6"/></svg><svg style="left:653px;top:689px" width="10" height="6"><path d="M1 5 L4.5 1.5 L8 5" fill="none" stroke="#bdbdbd" stroke-width="1.6"/></svg><svg style="left:179px;top:684px" width="25" height="16"><rect x="0" y="0.5" width="17" height="14" rx="3.5" fill="#bdbdbd"/><path d="M18 5 L24 1.5 V13.5 L18 10Z" fill="#bdbdbd"/></svg><svg style="left:296px;top:681px" width="20" height="22"><path d="M10 0.8 L18.5 3.8 V10 C18.5 15.5 14.5 19.2 10 20.8 C5.5 19.2 1.5 15.5 1.5 10 V3.8Z" fill="#bdbdbd"/><path d="M10 2.8 V10.5 H3.3 C3.3 10.5 3.3 10.8 3.3 10 V5.2Z M10 10.5 H16.7 C16.5 14.8 13.7 17.8 10 19 Z" fill="#1a1a1a"/></svg><svg style="left:398px;top:683px" width="27" height="19"><circle cx="8" cy="5" r="4.5" fill="#bdbdbd"/><circle cx="19" cy="6" r="3.8" fill="#bdbdbd"/><path d="M0.5 18 C0.5 12 4 10.5 8 10.5 C12 10.5 15.5 12 15.5 18Z" fill="#bdbdbd"/><path d="M13 18 C13 13.5 15.5 11.5 19 11.5 C23 11.5 25.5 13.5 25.5 18Z" fill="#bdbdbd"/></svg><div class="t" style="left:426.80px;top:685.00px;font-size:11px;color:#c6c6c6;transform:scaleX(1.0189);">150</div><svg style="left:505px;top:682px" width="22" height="20"><rect x="0.5" y="0.5" width="20.5" height="14" rx="3" fill="#bdbdbd"/><path d="M4 13 V19 L9 14Z" fill="#bdbdbd"/></svg><div class="a" style="left:601px;top:683px;width:24px;height:18px;border-radius:3px;background:#22c55e"></div><svg style="left:607px;top:686px" width="12" height="12"><path d="M6 1.5 V10 M2.5 5 L6 1.5 L9.5 5" fill="none" stroke="#0b2010" stroke-width="1.7"/></svg><svg style="left:700px;top:680px" width="24" height="22"><circle cx="10" cy="12" r="9.5" fill="#bdbdbd"/><circle cx="7" cy="10" r="1.3" fill="#1a1a1a"/><circle cx="13" cy="10" r="1.3" fill="#1a1a1a"/><path d="M5.5 13 C7 17 13 17 14.5 13" fill="none" stroke="#1a1a1a" stroke-width="1.5"/><path d="M18.5 0.5 V7 M15.2 3.8 H21.8" stroke="#bdbdbd" stroke-width="1.6"/></svg><svg style="left:782px;top:684px" width="19" height="18"><path d="M1 6 V3.5 C1 2 2 1 3.5 1 H6 M1 11 V13.5 C1 15 2 16 3.5 16 H6 M11 16 H13.5 C15 16 16 15 16 13.5 V11" fill="none" stroke="#bdbdbd" stroke-width="1.6"/><circle cx="13.5" cy="3.5" r="2.6" fill="none" stroke="#bdbdbd" stroke-width="1.6"/><circle cx="5" cy="12" r="2.2" fill="none" stroke="#bdbdbd" stroke-width="1.5"/></svg><svg style="left:862px;top:689px" width="22" height="6"><circle cx="2.5" cy="3" r="2.1" fill="#bdbdbd"/><circle cx="10.5" cy="3" r="2.1" fill="#bdbdbd"/><circle cx="18.5" cy="3" r="2.1" fill="#bdbdbd"/></svg><div class="a" style="left:966px;top:688px;width:68px;height:27px;border-radius:6px;background:#c92727"></div><div class="t" style="left:977.80px;top:695.00px;font-size:12px;color:#fff;font-weight:bold;transform:scaleX(0.9039);">Finalizar</div><div class="a" style="left:1046px;top:23px;width:320px;height:705px;background:#fff"></div><svg style="left:1064px;top:42px" width="12" height="8"><path d="M1.8 1.8 L5.5 5.3 L9.2 1.8" fill="none" stroke="#666" stroke-width="1.4"/></svg><div class="t" style="left:1149.80px;top:39.00px;font-size:14px;color:#232333;font-weight:bold;transform:scaleX(0.9117);">Participantes (150)</div><div class="a" style="left:1065px;top:77px;width:285px;height:31px;border:1px solid #bfbfc4;border-radius:7px"></div><svg style="left:1076px;top:86px" width="14" height="14"><circle cx="5.8" cy="5.8" r="4.8" fill="none" stroke="#6e6e78" stroke-width="1.3"/><path d="M9.3 9.3 L13 13" stroke="#6e6e78" stroke-width="1.4"/></svg><div class="t" style="left:1093.70px;top:85.00px;font-size:13px;color:#747487;transform:scaleX(0.9919);">Buscar un participante</div><div class="a" style="left:1069px;top:118px;width:26px;height:26px;border-radius:6px;background:#8e3eb5"></div><div class="t" style="left:1074.00px;top:125.00px;font-size:13.5px;color:#fff;font-weight:bold;transform:scaleX(0.9271);">JC</div><div class="t" style="left:1107.50px;top:126.00px;font-size:12.5px;color:#3a3a48;">Julio Cultura</div><svg style="left:1302px;top:122px" width="17" height="17"><rect x="5.8" y="2.3" width="4.2" height="7.5" rx="2.1" fill="none" stroke="#c8454f" stroke-width="1"/><path d="M3.8 8 C3.8 11 5.8 12.5 8 12.5 C10.3 12.5 12.2 11 12.2 8 M8 12.5 V15 M5.8 15.2 H10.2" fill="none" stroke="#c8454f" stroke-width="1"/><path d="M1 15.8 L15.5 1.8" stroke="#c8454f" stroke-width="1.1"/></svg><svg style="left:1325px;top:122px" width="19" height="17"><rect x="1.5" y="4.5" width="10.5" height="9" rx="1.2" fill="none" stroke="#6e6e78" stroke-width="1.1"/><path d="M12 7.3 L16.5 4.8 V12.8 L12 10.3" fill="none" stroke="#6e6e78" stroke-width="1.1"/></svg><div class="a" style="left:1069px;top:159px;width:26px;height:26px;border-radius:6px;background:#f09b1e"></div><div class="t" style="left:1074.00px;top:166.00px;font-size:13.5px;color:#fff;font-weight:bold;transform:scaleX(0.8891);">LC</div><div class="t" style="left:1107.50px;top:166.00px;font-size:12.5px;color:#3a3a48;transform:scaleX(1.0204);">Laura Carbajal. Suteba Ituzaingó</div><svg style="left:1302px;top:163px" width="17" height="17"><rect x="5.8" y="2.3" width="4.2" height="7.5" rx="2.1" fill="none" stroke="#c8454f" stroke-width="1"/><path d="M3.8 8 C3.8 11 5.8 12.5 8 12.5 C10.3 12.5 12.2 11 12.2 8 M8 12.5 V15 M5.8 15.2 H10.2" fill="none" stroke="#c8454f" stroke-width="1"/><path d="M1 15.8 L15.5 1.8" stroke="#c8454f" stroke-width="1.1"/></svg><svg style="left:1325px;top:163px" width="19" height="17"><rect x="1.5" y="4.5" width="10.5" height="9" rx="1.2" fill="none" stroke="#6e6e78" stroke-width="1.1"/><path d="M12 7.3 L16.5 4.8 V12.8 L12 10.3" fill="none" stroke="#6e6e78" stroke-width="1.1"/></svg><div class="a" style="left:1069px;top:200px;width:26px;height:26px;border-radius:6px;background:#2b4561"></div><div class="t" style="left:1074.00px;top:207.00px;font-size:13.5px;color:#fff;font-weight:bold;transform:scaleX(0.8891);">LR</div><div class="t" style="left:1107.50px;top:208.00px;font-size:12.5px;color:#3a3a48;transform:scaleX(1.0591);">Laura Rinaldi - Morón</div><svg style="left:1302px;top:204px" width="17" height="17"><rect x="5.8" y="2.3" width="4.2" height="7.5" rx="2.1" fill="none" stroke="#c8454f" stroke-width="1"/><path d="M3.8 8 C3.8 11 5.8 12.5 8 12.5 C10.3 12.5 12.2 11 12.2 8 M8 12.5 V15 M5.8 15.2 H10.2" fill="none" stroke="#c8454f" stroke-width="1"/><path d="M1 15.8 L15.5 1.8" stroke="#c8454f" stroke-width="1.1"/></svg><svg style="left:1325px;top:204px" width="19" height="17"><rect x="1.5" y="4.5" width="10.5" height="9" rx="1.2" fill="none" stroke="#6e6e78" stroke-width="1.1"/><path d="M12 7.3 L16.5 4.8 V12.8 L12 10.3" fill="none" stroke="#6e6e78" stroke-width="1.1"/></svg><div class="a" style="left:1069px;top:241px;width:26px;height:26px;border-radius:6px;background:#d4392b"></div><div class="t" style="left:1074.00px;top:248.00px;font-size:13.5px;color:#fff;font-weight:bold;transform:scaleX(1.0156);">LJ</div><div class="t" style="left:1107.50px;top:248.00px;font-size:12.5px;color:#3a3a48;transform:scaleX(1.0084);">Lemmi Juan Avellaneda</div><svg style="left:1302px;top:245px" width="17" height="17"><rect x="5.8" y="2.3" width="4.2" height="7.5" rx="2.1" fill="none" stroke="#c8454f" stroke-width="1"/><path d="M3.8 8 C3.8 11 5.8 12.5 8 12.5 C10.3 12.5 12.2 11 12.2 8 M8 12.5 V15 M5.8 15.2 H10.2" fill="none" stroke="#c8454f" stroke-width="1"/><path d="M1 15.8 L15.5 1.8" stroke="#c8454f" stroke-width="1.1"/></svg><svg style="left:1325px;top:245px" width="19" height="17"><rect x="1.5" y="4.5" width="10.5" height="9" rx="0.8" fill="none" stroke="#c8454f" stroke-width="1"/><path d="M12 7.3 L16.5 4.8 V12.8 L12 10.3" fill="none" stroke="#c8454f" stroke-width="1"/><path d="M1.3 16 L16 2" stroke="#c8454f" stroke-width="1.1"/></svg><div class="a" style="left:1069px;top:282px;width:26px;height:26px;overflow:hidden;border-radius:6px"><svg style="left:0;top:0;filter:blur(0.4px)" width="26" height="26" viewBox="0 0 80 80">
<rect x="-5" y="-5" width="90" height="90" fill="#e5bd45"/>
<rect x="56" y="-5" width="30" height="90" fill="#d9c79a"/>
<path d="M8 80 C12 62 26 58 40 58 C54 58 68 62 72 80 V85 H8Z" fill="#a8c4e0"/>
<ellipse cx="40" cy="36" rx="17" ry="22" fill="#b48a6c"/>
<path d="M22 30 C20 12 30 6 40 6 C52 6 60 14 58 30 L54 22 C48 16 32 16 26 22Z" fill="#231a16"/>
<path d="M30 48 C36 54 44 54 50 48" stroke="#3a2a20" stroke-width="4" fill="none"/>
</svg></div><div class="t" style="left:1107.50px;top:290.00px;font-size:12.5px;color:#3a3a48;transform:scaleX(1.0320);">Leonel Coronel</div><svg style="left:1302px;top:286px" width="17" height="17"><rect x="5.8" y="2.3" width="4.2" height="7.5" rx="2.1" fill="none" stroke="#c8454f" stroke-width="1"/><path d="M3.8 8 C3.8 11 5.8 12.5 8 12.5 C10.3 12.5 12.2 11 12.2 8 M8 12.5 V15 M5.8 15.2 H10.2" fill="none" stroke="#c8454f" stroke-width="1"/><path d="M1 15.8 L15.5 1.8" stroke="#c8454f" stroke-width="1.1"/></svg><svg style="left:1325px;top:286px" width="19" height="17"><rect x="1.5" y="4.5" width="10.5" height="9" rx="0.8" fill="none" stroke="#c8454f" stroke-width="1"/><path d="M12 7.3 L16.5 4.8 V12.8 L12 10.3" fill="none" stroke="#c8454f" stroke-width="1"/><path d="M1.3 16 L16 2" stroke="#c8454f" stroke-width="1.1"/></svg><div class="a" style="left:1357px;top:111px;width:7px;height:209px;background:#f0f0f6;border-radius:3px"></div><div class="a" style="left:1357px;top:201px;width:7px;height:8px;background:#a8a8b0;border-radius:4px"></div><div class="a" style="left:1084px;top:339px;width:46px;height:22px;border-radius:5px;background:#efeff3"></div><div class="a" style="left:1167px;top:339px;width:100px;height:22px;border-radius:5px;background:#efeff3"></div><div class="a" style="left:1304px;top:339px;width:24px;height:22px;border-radius:5px;background:#efeff3"></div><div class="t" style="left:1090.00px;top:343.00px;font-size:12px;color:#232333;transform:scaleX(1.0405);">Invitar</div><div class="t" style="left:1174.00px;top:343.00px;font-size:12px;color:#232333;transform:scaleX(0.9694);">Silenciar a todos</div><div class="t" style="left:1310.50px;top:343.00px;font-size:12px;color:#232333;">...</div><div class="a" style="left:1064px;top:375px;width:302px;height:1px;background:#e8e8ec"></div><svg style="left:1064px;top:394px" width="12" height="8"><path d="M1.8 1.8 L5.5 5.3 L9.2 1.8" fill="none" stroke="#666" stroke-width="1.4"/></svg><div class="t" style="left:1192.30px;top:391.00px;font-size:13px;color:#232333;font-weight:bold;transform:scaleX(0.9485);">Chat</div><div class="t" style="left:1105.00px;top:423.00px;font-size:12.5px;color:#3872c4;transform:scaleX(0.9669);">Laura Bozan- GRAL ALVEAR</div><div class="t" style="left:1268.00px;top:423.00px;font-size:12.5px;color:#6e6e78;transform:scaleX(0.8631);">a</div><div class="t" style="left:1279.00px;top:423.00px;font-size:12.5px;color:#3872c4;transform:scaleX(1.0703);">Todos</div><div class="a" style="left:1068px;top:442px;width:27px;height:27px;border-radius:6px;background:#f29f1c"></div><div class="t" style="left:1074.50px;top:449.00px;font-size:12px;color:#fff;transform:scaleX(0.9538);">LB</div><div class="a" style="left:1105px;top:439px;width:127px;height:53px;border-radius:11px;background:#f1f1f5"></div><div class="t" style="left:1115.50px;top:450.00px;font-size:14.5px;color:#43434d;">nos vemos el 29</div><div class="t" style="left:1115.50px;top:470.00px;font-size:14.5px;color:#43434d;">compañeros!!</div><div class="t" style="left:1105.00px;top:513.00px;font-size:12.5px;color:#3872c4;transform:scaleX(1.0429);">Daniela Arripe</div><div class="t" style="left:1191.80px;top:513.00px;font-size:12.5px;color:#6e6e78;transform:scaleX(0.8631);">a</div><div class="t" style="left:1203.50px;top:513.00px;font-size:12.5px;color:#3872c4;transform:scaleX(1.0493);">Todos</div><div class="a" style="left:1068px;top:532px;width:27px;height:27px;border-radius:6px;background:#7c27b5"></div><div class="t" style="left:1076.00px;top:538.00px;font-size:18px;color:#fff;transform:scaleX(0.8462);">D</div><div class="a" style="left:1105px;top:530px;width:67px;height:35px;border-radius:11px;background:#f1f1f5"></div><div class="t" style="left:1115.50px;top:540.00px;font-size:14.5px;color:#43434d;transform:scaleX(0.9927);">gracias</div><div class="a" style="left:1357px;top:421px;width:7px;height:158px;background:#f0f0f6;border-radius:3px"></div><div class="a" style="left:1357px;top:571px;width:7px;height:8px;background:#a8a8b0;border-radius:4px"></div><div class="a" style="left:1046px;top:582px;width:320px;height:25px;background:#f4f5f9;border-bottom:1px solid #e4e5ea"></div><svg style="left:1058px;top:588px" width="15" height="14"><circle cx="5.5" cy="4" r="3" fill="none" stroke="#6e6e78" stroke-width="1.1"/><path d="M0.8 12.5 C0.8 9 3 7.8 5.5 7.8 C6.5 7.8 7.2 8 7.8 8.3" fill="none" stroke="#6e6e78" stroke-width="1.1"/><path d="M10.5 7 L14 8.2 V10.5 C14 12 12.5 13.2 10.5 13.8 C8.5 13.2 7 12 7 10.5 V8.2Z" fill="#1f6fd9"/></svg><div class="t" style="left:1076.50px;top:588.00px;font-size:12.5px;color:#3f3f4a;transform:scaleX(0.9284);">ién puede ver sus mensajes? La grabación está habilit</div><div class="t" style="left:1063.40px;top:624.00px;font-size:12px;color:#3f3f4a;transform:scaleX(0.9207);">Enviar a:</div><div class="a" style="left:1116px;top:620px;width:77px;height:21px;border-radius:4px;background:#efeff3"></div><div class="t" style="left:1123.30px;top:624.00px;font-size:12px;color:#232333;transform:scaleX(0.9033);">Gimena ...</div><svg style="left:1177px;top:627px" width="10" height="7"><path d="M1 1.5 L4.5 5 L8 1.5" fill="none" stroke="#232333" stroke-width="1.5"/></svg><div class="t" style="left:1200.00px;top:624.00px;font-size:12px;color:#d23a3a;transform:scaleX(0.9849);">(Mensaje directo)</div><svg style="left:1309px;top:622px" width="16" height="16"><circle cx="8" cy="8" r="7" fill="none" stroke="#6e6e78" stroke-width="1.2"/><circle cx="5.6" cy="6.3" r="0.9" fill="#6e6e78"/><circle cx="10.4" cy="6.3" r="0.9" fill="#6e6e78"/><path d="M4.8 9.3 C6 11.5 10 11.5 11.2 9.3" fill="none" stroke="#6e6e78" stroke-width="1.1"/></svg><svg style="left:1334px;top:628px" width="13" height="4"><circle cx="1.5" cy="2" r="1.1" fill="#555"/><circle cx="6.0" cy="2" r="1.1" fill="#555"/><circle cx="10.5" cy="2" r="1.1" fill="#555"/></svg><div class="t" style="left:1063.40px;top:652.00px;font-size:12.5px;color:#5a5a66;transform:scaleX(1.0129);">Escribir mensaje aquí...</div><div class="t" style="left:1036.40px;top:651.00px;font-size:20px;color:rgba(184,184,184,0.8);transform:scaleX(0.9911);">Activar Windows</div><div class="t" style="left:1036.40px;top:678.00px;font-size:14.5px;color:rgba(184,184,184,0.8);transform:scaleX(1.0197);">Ve a Configuración para activar Windows.</div><div class="a" style="left:0;top:728px;width:1366px;height:40px;background:#2a2d31"></div><svg style="left:15px;top:740px" width="18" height="17"><path d="M0 2.3 L7.3 1.3 V7.8 H0Z M8.3 1.1 L17 0 V7.8 H8.3Z M0 8.8 H7.3 V15.3 L0 14.3Z M8.3 8.8 H17 V16.6 L8.3 15.5Z" fill="#fff"/></svg><div class="a" style="left:48px;top:728px;width:344px;height:40px;background:#f0f0f0"></div><div class="a" style="left:57px;top:738px;width:21px;height:21px;border-radius:50%;border:3px solid #111"></div><div class="t" style="left:88.00px;top:742.00px;font-size:14.5px;color:#333;">Escribe aquí para buscar</div><svg style="left:365px;top:738px" width="13" height="20"><rect x="3.5" y="1" width="6" height="11" rx="3" fill="none" stroke="#333" stroke-width="1.3"/><path d="M1 8.5 C1 12.5 3.5 14.5 6.5 14.5 C9.5 14.5 12 12.5 12 8.5 M6.5 14.5 V18.5 M3.5 18.5 H9.5" fill="none" stroke="#333" stroke-width="1.3"/></svg><svg style="left:407px;top:739px" width="18" height="17"><path d="M1.7 1 V3.3 H11.8 V1 M1.7 16 V13.7 H11.8 V16" fill="none" stroke="#fff" stroke-width="1.4"/><rect x="1.7" y="5.3" width="10.1" height="6.2" fill="none" stroke="#fff" stroke-width="1.4"/><path d="M15.5 1 V3.5 M15.5 9.5 V16" stroke="#fff" stroke-width="1.4"/><rect x="14" y="5" width="3" height="3" fill="#fff"/></svg><div class="a" style="left:445px;top:739px;width:1px;height:19px;background:#5a5f63"></div><div class="a" style="left:448px;top:739px;width:1px;height:19px;background:#5a5f63"></div><div class="a" style="left:710px;top:739px;width:1px;height:19px;background:#5a5f63"></div><div class="a" style="left:713px;top:739px;width:1px;height:19px;background:#5a5f63"></div><svg style="left:471px;top:739px" width="23" height="19"><path d="M0.5 1 H8 L10 3 H22 V18 H0.5Z" fill="#e8b84a"/><rect x="0.5" y="5" width="21.5" height="13" fill="#f5d77a"/><rect x="6" y="11" width="10" height="6" fill="#3a9ad9"/><rect x="8" y="11" width="6" height="3" fill="#cfe8f7"/></svg><div class="a" style="left:467px;top:766px;width:30px;height:2px;background:#76b9ed"></div><svg style="left:510px;top:738px" width="22" height="20"><path d="M11 1 C4.5 1 0.8 5.5 0.8 10.5 C0.8 16 5 19.5 10.5 19.5 C14 19.5 16.8 18.2 18.5 16.5 V12.5 C16.5 14.5 13.8 15.8 11 15.8 C7.5 15.8 5.5 13.8 5.3 11.5 H20.8 C21 10.5 21 9.8 21 9 C21 4.5 17 1 11 1Z M5.6 8.3 C6 6 8.3 4.5 11 4.5 C13.8 4.5 15.8 6 16 8.3Z" fill="#1e7fe0"/></svg><svg style="left:548px;top:736px" width="26" height="26"><circle cx="11.5" cy="11.5" r="10.5" fill="#db4437"/><path d="M11.5 11.5 L2.4 16.75 A10.5 10.5 0 0 0 20 17.5Z" fill="#0f9d58"/><path d="M11.5 11.5 L20.6 6.25 A10.5 10.5 0 0 1 17 21Z" fill="#f4b400"/><circle cx="11.5" cy="11.5" r="4.5" fill="#fff"/><circle cx="11.5" cy="11.5" r="3.4" fill="#4285f4"/><circle cx="18.5" cy="18.5" r="6" fill="#8a5a3a"/><circle cx="18.5" cy="17" r="3" fill="#e0b090"/></svg><div class="a" style="left:545px;top:766px;width:30px;height:2px;background:#76b9ed"></div><div class="a" style="left:580px;top:728px;width:34px;height:40px;background:#3b4044"></div><div class="a" style="left:585px;top:737px;width:23px;height:22px;border-radius:6px;background:#4a8df5"></div><svg style="left:585px;top:737px" width="23" height="22"><rect x="5" y="7" width="9" height="8" rx="1.5" fill="#fff"/><path d="M14.5 10 L18.5 7.3 V14.7 L14.5 12Z" fill="#fff"/></svg><div class="a" style="left:580px;top:766px;width:34px;height:2px;background:#76b9ed"></div><svg style="left:625px;top:737px" width="26" height="22"><rect x="9" y="1" width="15" height="20" fill="#fff"/><path d="M11 5 H22 M11 8 H22 M11 11 H22 M11 14 H22 M11 17 H22" stroke="#2b579a" stroke-width="1.2"/><rect x="1" y="3" width="13" height="16" fill="#2b579a"/><path d="M3 6.5 L4.8 15 L7.5 8.5 L10.2 15 L12 6.5" fill="none" stroke="#fff" stroke-width="1.4"/></svg><div class="a" style="left:623px;top:766px;width:32px;height:2px;background:#76b9ed"></div><svg style="left:665px;top:737px" width="24" height="22"><rect x="0.5" y="0.5" width="23" height="21" fill="#fff"/><rect x="2" y="2" width="20" height="18" fill="#000"/><path d="M2 20 L9.5 8 L13.5 13.5 L16 10.5 L22 18.5 V20Z" fill="#fff"/></svg><div class="a" style="left:662px;top:766px;width:30px;height:2px;background:#76b9ed"></div><div class="t" style="left:725.00px;top:742.00px;font-size:12.5px;color:#e8e8e8;transform:scaleX(0.9597);">Dirección</div><div class="a" style="left:781px;top:737px;width:226px;height:23px;background:#fff"></div><div class="a" style="left:989px;top:737px;width:1px;height:23px;background:#ccc"></div><svg style="left:975px;top:744px" width="12" height="8"><path d="M1 1.5 L5.5 6 L10 1.5" fill="none" stroke="#444" stroke-width="1.3"/></svg><svg style="left:991px;top:740px" width="15" height="16"><path d="M11.5 4.5 A5.3 5.3 0 1 0 12.5 9" fill="none" stroke="#777" stroke-width="1.4"/><path d="M8.5 1 L12 4.5 L8.5 7.5" fill="none" stroke="#777" stroke-width="1.4"/></svg><svg style="left:1031px;top:739px" width="17" height="17"><circle cx="5" cy="8" r="2.6" fill="none" stroke="#fff" stroke-width="1.2"/><circle cx="11" cy="4" r="2.6" fill="none" stroke="#fff" stroke-width="1.2"/><path d="M0.8 15.5 C0.8 12.5 2.5 11.2 5 11.2 C7.5 11.2 9.2 12.5 9.2 15.5 M7.2 8.2 C8 7.5 9.3 7.2 11 7.2 C13.5 7.2 15.5 8.5 15.5 11.5" fill="none" stroke="#fff" stroke-width="1.2"/></svg><svg style="left:1068px;top:742px" width="14" height="9"><path d="M1 8 L7 2 L13 8" fill="none" stroke="#fff" stroke-width="1.5"/></svg><svg style="left:1089px;top:740px" width="20" height="13"><path d="M4 12 C1.5 12 0.5 10.5 0.5 9 C0.5 7 2 6 4 6 C4.5 3 7 1 10 1 C13 1 15 3 15.5 5.5 C17.5 5.5 19.5 7 19.5 9 C19.5 11 18 12 16 12Z" fill="#d8d8d8"/></svg><svg style="left:1114px;top:738px" width="22" height="20"><rect x="1" y="1.5" width="17" height="14" fill="none" stroke="#fff" stroke-width="1.3"/><path d="M5 5 H13 M5 8.5 H9" stroke="#fff" stroke-width="1.3"/><circle cx="15" cy="15" r="4.3" fill="#e81123"/><path d="M15 12.5 V15.5 M15 16.8 V17.5" stroke="#fff" stroke-width="1.2"/></svg><svg style="left:1139px;top:740px" width="22" height="15"><path d="M1 5.5 H5 M1 9.5 H5 M5 3 V12 C6.5 12 8 11 8 7.5 C8 4 6.5 3 5 3" fill="none" stroke="#fff" stroke-width="1.3"/><rect x="9" y="3" width="12" height="9" fill="none" stroke="#fff" stroke-width="1.3"/><rect x="11" y="5" width="7" height="5" fill="#fff"/></svg><svg style="left:1166px;top:740px" width="17" height="17"><path d="M1 15 C1 8 7 2 14.5 2 M4 15 C4 10 8.5 5.5 13.5 5.5 M7 15 C7 11.5 10 8.5 13.5 8.5" fill="none" stroke="#aaa" stroke-width="1.3" stroke-dasharray="1.5 1"/><circle cx="13" cy="14" r="1.5" fill="#fff"/></svg><svg style="left:1186px;top:740px" width="20" height="17"><path d="M1 6 H4.5 L9 1.5 V15.5 L4.5 11 H1Z" fill="none" stroke="#fff" stroke-width="1.3"/><path d="M11.5 5.5 C13 7.5 13 9.5 11.5 11.5 M14 3.5 C16.5 6.5 16.5 10.5 14 13.5 M16.5 1.5 C20 5.5 20 11.5 16.5 15.5" fill="none" stroke="#fff" stroke-width="1.3"/></svg><div class="t" style="left:1214.50px;top:734.00px;font-size:12px;color:#fff;transform:scaleX(0.9162);">ESP</div><div class="t" style="left:1214.50px;top:751.00px;font-size:12px;color:#fff;transform:scaleX(0.9479);">LAA</div><div class="t" style="left:1264.50px;top:733.00px;font-size:12.5px;color:#fff;transform:scaleX(0.8951);">19:59</div><div class="t" style="left:1249.00px;top:751.00px;font-size:12.5px;color:#fff;transform:scaleX(0.9111);">22/03/2022</div><svg style="left:1324px;top:740px" width="19" height="18"><path d="M0.8 0.8 H17.5 V12.5 H11.5 L8 16 V12.5 H0.8Z" fill="none" stroke="#fff" stroke-width="1.3"/></svg></body></html>
